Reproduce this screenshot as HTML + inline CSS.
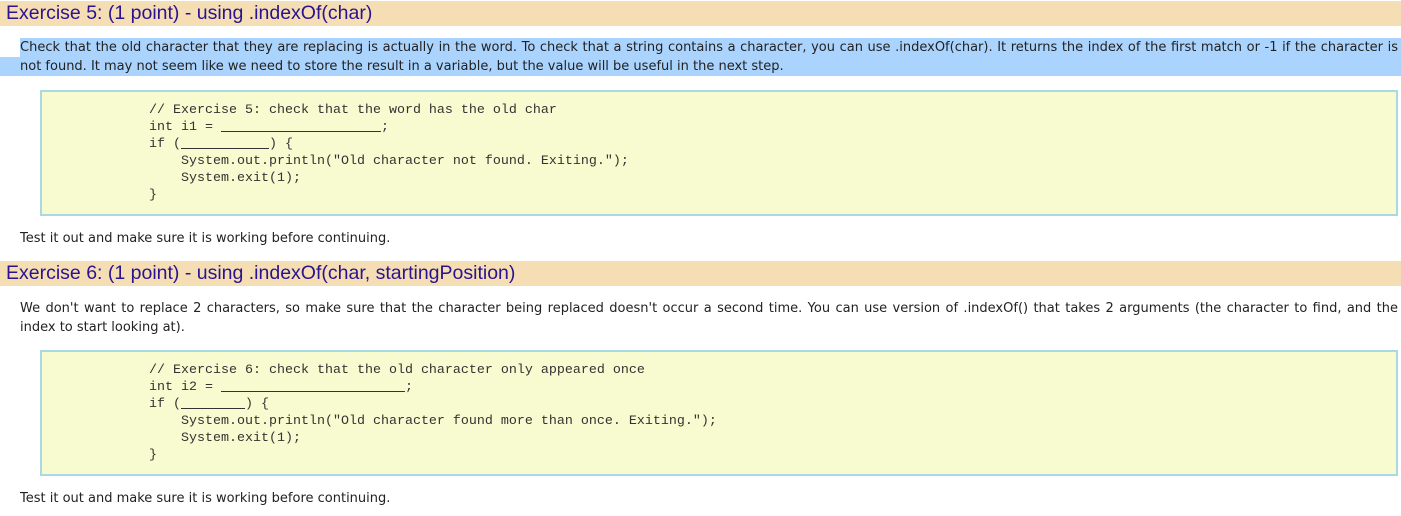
<!DOCTYPE html>
<html><head><meta charset="utf-8"><style>
body{margin:0;width:1401px;height:516px;background:#fff;position:relative;overflow:hidden;font-family:"DejaVu Sans","Liberation Sans",sans-serif;font-size:13px;color:#222}
.h{position:absolute;left:0;width:1401px;height:25px;background:#f5deb3;color:#2a1290;font-family:"Liberation Sans",sans-serif;font-size:19.5px;line-height:25px;padding-left:6px;box-sizing:border-box}
.l{position:absolute;white-space:nowrap;height:19px;line-height:19px}
.j{text-align:justify;text-align-last:justify}
.box{position:absolute;left:40px;width:1358px;height:126px;box-sizing:border-box;border:2px solid #a9d9e3;background:#f8fad0}
.code{position:absolute;left:149px;font-family:"Liberation Mono",monospace;font-size:13.33px;line-height:17px;white-space:pre;color:#333}
</style></head><body>
<div class="h" style="top:1px">Exercise 5: (1 point) - using .indexOf(char)</div>
<div class="l j" style="top:38px;left:20px;width:1378px;padding-right:3px;background:#aad4fe;box-sizing:content-box">Check that the old character that they are replacing is actually in the word. To check that a string contains a character, you can use .indexOf(char). It returns the index of the first match or -1 if the character is</div>
<div class="l" style="top:57px;left:0;width:1401px;background:#aad4fe;padding-left:20px;box-sizing:border-box">not found. It may not seem like we need to store the result in a variable, but the value will be useful in the next step.</div>
<div class="box" style="top:90px"></div>
<div class="code" style="top:102px">// Exercise 5: check that the word has the old char
int i1 = <u>                    </u>;
if (<u>           </u>) {
    System.out.println("Old character not found. Exiting.");
    System.exit(1);
}</div>
<div class="l" style="top:229px;left:20px">Test it out and make sure it is working before continuing.</div>
<div class="h" style="top:261px">Exercise 6: (1 point) - using .indexOf(char, startingPosition)</div>
<div class="l j" style="top:299px;left:20px;width:1378px">We don't want to replace 2 characters, so make sure that the character being replaced doesn't occur a second time. You can use version of .indexOf() that takes 2 arguments (the character to find, and the</div>
<div class="l" style="top:318px;left:20px">index to start looking at).</div>
<div class="box" style="top:350px"></div>
<div class="code" style="top:362px">// Exercise 6: check that the old character only appeared once
int i2 = <u>                       </u>;
if (<u>        </u>) {
    System.out.println("Old character found more than once. Exiting.");
    System.exit(1);
}</div>
<div class="l" style="top:489px;left:20px">Test it out and make sure it is working before continuing.</div>
</body></html>
